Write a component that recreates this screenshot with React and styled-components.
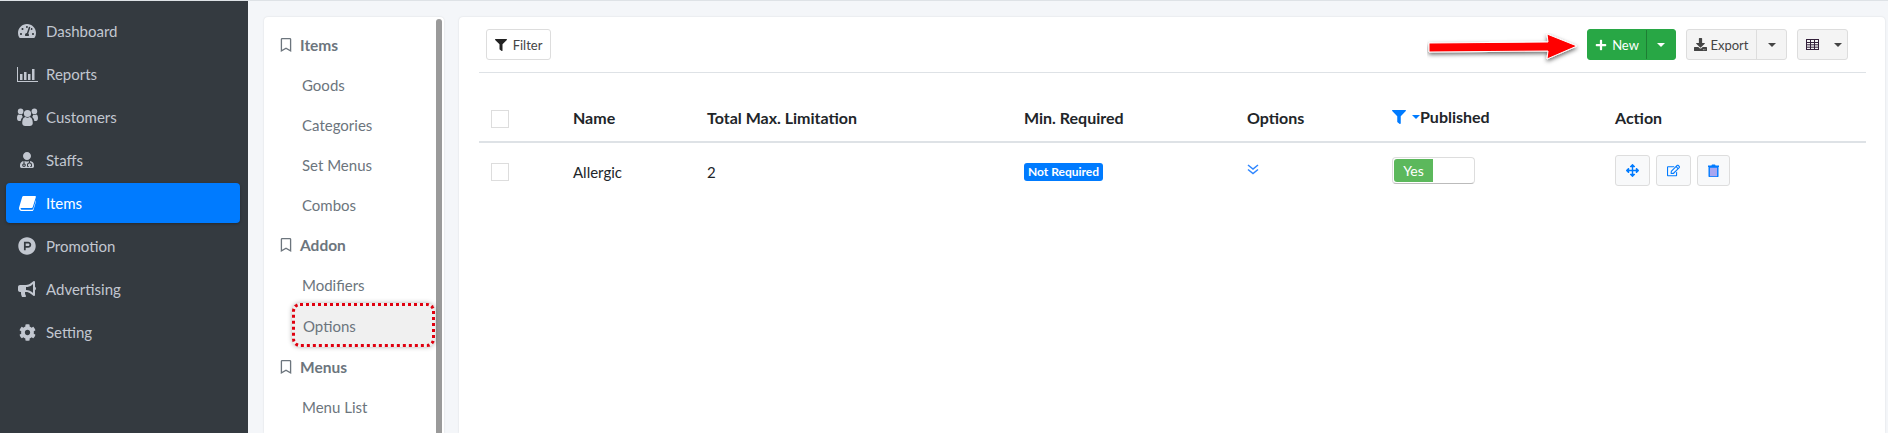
import styled, { createGlobalStyle } from "styled-components";
import {
  FaTachometerAlt,
  FaUserMd,
  FaProductHunt,
  FaBullhorn,
  FaCog,
  FaRegBookmark,
  FaFilter,
  FaPlus,
  FaDownload,
  FaArrowsAlt,
  FaRegEdit,
} from "react-icons/fa";

const GlobalStyle = createGlobalStyle`
  html, body {
    margin: 0;
    height: 100%;
    overflow: hidden;
    font-family: "Lato", "Liberation Sans", sans-serif;
    background: #f4f6f9;
  }
  #root {
    height: 100%;
  }
`;

const Page = styled.div`
  display: flex;
  height: 100%;
  box-sizing: border-box;
  border-top: 1px solid #dee2e6;
`;

const Sidebar = styled.aside`
  width: 248px;
  flex-shrink: 0;
  background: #343a40;
  padding: 10px 8px 0 6px;
  box-sizing: border-box;
`;

const NavItem = styled.div`
  display: flex;
  align-items: center;
  height: 40px;
  margin-bottom: 3px;
  border-radius: 4px;
  font-size: 15px;
  color: ${(p) => (p.$active ? "#fff" : "#c2c7d0")};
  background: ${(p) => (p.$active ? "#007bff" : "transparent")};
  box-shadow: ${(p) => (p.$active ? "0 1px 3px rgba(0,0,0,.3)" : "none")};
`;

const NavIcon = styled.span`
  width: 40px;
  flex-shrink: 0;
  box-sizing: border-box;
  padding-left: 2px;
  display: flex;
  justify-content: center;
  font-size: 18px;
  line-height: 0;
`;

const Content = styled.main`
  flex: 1;
  min-width: 0;
  display: flex;
  gap: 15px;
  padding: 16px 3px 0 16px;
`;

const SubCard = styled.nav`
  width: 180px;
  flex-shrink: 0;
  background: #fff;
  border-radius: 4px 4px 0 0;
  box-shadow: 0 0 2px rgba(0, 0, 0, 0.12);
  padding: 8px 8px 0 15px;
  box-sizing: border-box;
  position: relative;
  overflow: hidden;
`;

const ScrollThumb = styled.div`
  position: absolute;
  top: 2px;
  bottom: 0;
  right: 2px;
  width: 6px;
  border-radius: 3px 3px 0 0;
  background: #9a9a9a;
`;

const GroupTitle = styled.div`
  display: flex;
  align-items: center;
  gap: 7px;
  height: 40px;
  font-size: 15.5px;
  font-weight: 700;
  color: #6c757d;
  svg {
    font-size: 14px;
    color: #6c757d;
  }
`;

const SubLink = styled.div`
  display: flex;
  align-items: center;
  height: 40px;
  padding-left: 23px;
  font-size: 15px;
  color: #6c757d;
`;

const SelectedLink = styled(SubLink)`
  position: relative;
  height: 44px;
  width: 143px;
  box-sizing: border-box;
  margin: -2px 0 0 13px;
  padding: 2px 0 0 8px;
  background: #f0f0f0;
  border: 3px dotted #e0000f;
  border-radius: 8px;
  box-shadow: 0 0 5px rgba(0, 0, 0, 0.3);
`;

const MainCard = styled.section`
  flex: 1;
  min-width: 0;
  background: #fff;
  border-radius: 4px 4px 0 0;
  box-shadow: 0 0 2px rgba(0, 0, 0, 0.12);
  padding: 12px 19px 0 20px;
  position: relative;
`;

const Toolbar = styled.div`
  display: flex;
  align-items: flex-start;
  justify-content: space-between;
  height: 43px;
  padding: 0 18px 0 7px;
  border-bottom: 1px solid #dee2e6;
`;

const ToolGroup = styled.div`
  display: flex;
  gap: 10px;
`;

const FilterButton = styled.button`
  display: flex;
  align-items: center;
  gap: 6px;
  height: 31px;
  width: 65px;
  box-sizing: border-box;
  justify-content: center;
  padding: 0;
  background: #fff;
  border: 1px solid #ddd;
  border-radius: 3px;
  font: inherit;
  font-size: 13px;
  color: #444;
  svg {
    font-size: 12px;
    color: #222;
  }
`;

const SplitButton = styled.div`
  display: flex;
  height: 31px;
  box-sizing: border-box;
  border-radius: 3px;
  overflow: hidden;
  border: 1px solid ${(p) => (p.$primary ? "#28a745" : "#ddd")};
  background: ${(p) => (p.$primary ? "#28a745" : "#f4f4f4")};
  color: ${(p) => (p.$primary ? "#fff" : "#444")};
  font-size: 13px;
`;

const SplitMain = styled.div`
  display: flex;
  align-items: center;
  justify-content: center;
  gap: ${(p) => p.$gap || 5}px;
  width: ${(p) => p.$width}px;
  border-right: 1px solid ${(p) => p.$line || "transparent"};
  box-sizing: border-box;
`;

const Caret = styled.span`
  display: block;
  width: 0;
  height: 0;
  border-left: 4px solid transparent;
  border-right: 4px solid transparent;
  border-top: 4px solid ${(p) => p.$color || "#444"};
`;

const SplitCaret = styled.div`
  display: flex;
  align-items: center;
  justify-content: center;
  width: ${(p) => p.$width}px;
`;

const Table = styled.table`
  width: 100%;
  table-layout: fixed;
  border-collapse: collapse;
  color: #212529;
  margin-top: 23px;
`;

const Th = styled.th`
  box-sizing: border-box;
  width: ${(p) => p.$width}px;
  height: 46px;
  padding: 0 12px 3px;
  text-align: left;
  font-weight: 700;
  font-size: 16px;
  border-bottom: 2px solid #dee2e6;
  white-space: nowrap;
`;

const Td = styled.td`
  height: 58px;
  padding: 0 12px;
  font-size: 15px;
  vertical-align: middle;
`;

const Check = styled.span`
  display: block;
  width: 18px;
  height: 18px;
  box-sizing: border-box;
  border: 1px solid #ddd;
  background: #fff;
`;

const HeadCheck = styled(Check)`
  margin-top: 3px;
`;

const Badge = styled.span`
  display: block;
  background: #007bff;
  color: #fff;
  font-size: 12px;
  font-weight: 700;
  line-height: 18px;
  height: 18px;
  width: 79px;
  text-align: center;
  border-radius: 3px;
  white-space: nowrap;
`;

const PublishedHead = styled.span`
  display: inline-flex;
  align-items: center;
  svg {
    font-size: 14px;
    color: #007bff;
    margin-right: 6px;
  }
`;

const Chevrons = styled.svg`
  display: block;
  margin-bottom: 5px;
`;

const Toggle = styled.div`
  display: flex;
  width: 83px;
  height: 27px;
  margin-bottom: 4px;
  padding: 1px;
  box-sizing: border-box;
  border: 1px solid #ddd;
  border-bottom-color: #bbb;
  border-radius: 4px;
  background: #fff;
`;

const ToggleOn = styled.div`
  width: 39px;
  display: flex;
  align-items: center;
  justify-content: center;
  background: #5cb85c;
  color: #fff;
  font-size: 14px;
  border-radius: 3px 0 0 3px;
`;

const ActionRow = styled.div`
  display: flex;
  gap: 6px;
  margin-bottom: 3px;
`;

const ActionButton = styled.button`
  display: flex;
  align-items: center;
  justify-content: center;
  width: ${(p) => p.$width || 35}px;
  height: 31px;
  padding: 0;
  background: #f8f9fa;
  border: 1px solid #ddd;
  border-radius: 3px;
  color: #007bff;
  font-size: 13px;
`;

const Pointer = styled.svg`
  position: absolute;
  left: 968px;
  top: 16px;
`;

const BarsIcon = () => (
  <svg width="21" height="15" viewBox="0 0 21 15" fill="currentColor">
    <path d="M0 0h1v14h20v1H0z" />
    <path d="M3 7h2.500v6H3zM7 5h2.500v8H7zM11 7h2.500v6H11zM15 2h2.500v11H15z" />
  </svg>
);

const UsersIcon = () => (
  <svg width="21" height="18" viewBox="0 0 21 18" fill="currentColor">
    <circle cx="10.500" cy="5.500" r="3.600" />
    <circle cx="3.600" cy="3.400" r="2.800" />
    <circle cx="17.400" cy="3.400" r="2.800" />
    <path d="M5.200 15c0-4 1.600-6 3.200-6 .7.500 1.300.8 2.100.8s1.400-.3 2.100-.8c1.600 0 3.200 2 3.200 6 0 2-1.300 3-3 3H8.200c-1.700 0-3-1-3-3z" />
    <path d="M0 10c0-2 .6-3.600 2-3.600.5.400 1 .6 1.600.6.500 0 1-.1 1.400-.3-.1.800.3 1.700.9 2.300-1.300.8-2 2.400-2.200 4H2c-1.200 0-2-1-2-3zM21 10c0-2-.6-3.600-2-3.600-.5.400-1 .6-1.600.6-.5 0-1-.1-1.400-.3.1.800-.3 1.700-.9 2.300 1.300.8 2 2.400 2.200 4H19c1.200 0 2-1 2-3z" />
  </svg>
);

const BookIcon = () => (
  <svg width="17" height="15" viewBox="0 0 17 15" fill="currentColor">
    <path d="M4.500 0H16c.7 0 1 .5.8 1.200l-3 9.800c-.2.600-.7 1-1.300 1H2.400c-.6 0-1 .6-.8 1.100.2.400.6.6 1.100.6h10.400c.5 0 .9-.3 1.100-.7l2.800-9v1.500l-2.500 8.200c-.2.700-.8 1.300-1.500 1.300H2.600C1.200 15 .1 13.900 0 12.500c0-.3 0-.6.1-.9L3.200 1c.2-.6.700-1 1.300-1z" />
  </svg>
);

const GridIcon = () => (
  <svg width="13" height="11" viewBox="0 0 13 11" fill="none" stroke="#33203a" strokeWidth="1">
    <rect x="0.500" y="0.500" width="12" height="10" />
    <path d="M0 3.500h13M0 5.800h13M0 8.200h13M4.500 0v11M8.500 0v11" />
  </svg>
);

const TrashIcon = () => (
  <svg width="11" height="13" viewBox="0 0 11 13">
    <path d="M1.200 3h8.600v9a1 1 0 0 1-1 1H2.200a1 1 0 0 1-1-1z" fill="#a9a6f0" stroke="#007bff" strokeWidth="1.400" />
    <path d="M0 1.600h3.400L4 .4h3l.6 1.200H11V3H0z" fill="#007bff" />
  </svg>
);

const navItems = [
  { label: "Dashboard", icon: <FaTachometerAlt /> },
  { label: "Reports", icon: <BarsIcon /> },
  { label: "Customers", icon: <UsersIcon /> },
  { label: "Staffs", icon: <FaUserMd size={16} /> },
  { label: "Items", icon: <BookIcon />, active: true },
  { label: "Promotion", icon: <FaProductHunt /> },
  { label: "Advertising", icon: <FaBullhorn /> },
  { label: "Setting", icon: <FaCog size={17} /> },
];

const subMenu = [
  { title: "Items", links: ["Goods", "Categories", "Set Menus", "Combos"] },
  { title: "Addon", links: ["Modifiers", "Options"] },
  { title: "Menus", links: ["Menu List"] },
];

export default function App() {
  return (
    <>
      <GlobalStyle />
      <Page>
        <Sidebar>
          {navItems.map((item) => (
            <NavItem key={item.label} $active={item.active}>
              <NavIcon>{item.icon}</NavIcon>
              {item.label}
            </NavItem>
          ))}
        </Sidebar>
        <Content>
          <SubCard>
            <ScrollThumb />
            {subMenu.map((group) => (
              <div key={group.title}>
                <GroupTitle>
                  <FaRegBookmark />
                  {group.title}
                </GroupTitle>
                {group.links.map((link) =>
                  link === "Options" ? (
                    <SelectedLink key={link}>{link}</SelectedLink>
                  ) : (
                    <SubLink key={link}>{link}</SubLink>
                  )
                )}
              </div>
            ))}
          </SubCard>
          <MainCard>
            <Toolbar>
              <FilterButton>
                <FaFilter />
                Filter
              </FilterButton>
              <ToolGroup>
                <SplitButton $primary>
                  <SplitMain $width={59} $line="#1e7e34">
                    <FaPlus size={12} />
                    New
                  </SplitMain>
                  <SplitCaret $width={28}>
                    <Caret $color="#fff" />
                  </SplitCaret>
                </SplitButton>
                <SplitButton>
                  <SplitMain $width={70} $gap={3} $line="#ddd">
                    <FaDownload size={13} />
                    Export
                  </SplitMain>
                  <SplitCaret $width={29}>
                    <Caret />
                  </SplitCaret>
                </SplitButton>
                <SplitButton>
                  <SplitMain $width={30}>
                    <GridIcon />
                  </SplitMain>
                  <SplitCaret $width={19}>
                    <Caret />
                  </SplitCaret>
                </SplitButton>
              </ToolGroup>
            </Toolbar>
            <Pointer width="156" height="36" viewBox="0 0 156 36">
              <defs>
                <filter id="arrowShadow" x="-5%" y="-20%" width="110%" height="150%">
                  <feDropShadow dx="0" dy="2" stdDeviation="2" floodColor="#000" floodOpacity="0.6" />
                </filter>
              </defs>
              <polygon
                points="2,10 121,9 120,1 150,13 120,26 121,18 2,19"
                fill="#f00"
                stroke="#fff"
                strokeWidth="1"
                filter="url(#arrowShadow)"
              />
            </Pointer>
            <Table>
              <thead>
                <tr>
                  <Th $width={82}>
                    <HeadCheck />
                  </Th>
                  <Th $width={134}>Name</Th>
                  <Th $width={317}>Total Max. Limitation</Th>
                  <Th $width={223}>Min. Required</Th>
                  <Th $width={145}>Options</Th>
                  <Th $width={223}>
                    <PublishedHead>
                      <FaFilter />
                      <Caret $color="#007bff" />
                      Published
                    </PublishedHead>
                  </Th>
                  <Th>Action</Th>
                </tr>
              </thead>
              <tbody>
                <tr>
                  <Td>
                    <Check />
                  </Td>
                  <Td>Allergic</Td>
                  <Td>2</Td>
                  <Td>
                    <Badge>Not Required</Badge>
                  </Td>
                  <Td>
                    <Chevrons
                      width="12"
                      height="11"
                      viewBox="0 0 12 11"
                      fill="none"
                      stroke="#2e86ff"
                      strokeWidth="1.500"
                    >
                      <path d="M1 1l5 4 5-4M1 5.500l5 4 5-4" />
                    </Chevrons>
                  </Td>
                  <Td>
                    <Toggle>
                      <ToggleOn>Yes</ToggleOn>
                    </Toggle>
                  </Td>
                  <Td>
                    <ActionRow>
                      <ActionButton>
                        <FaArrowsAlt />
                      </ActionButton>
                      <ActionButton>
                        <FaRegEdit />
                      </ActionButton>
                      <ActionButton $width={33}>
                        <TrashIcon />
                      </ActionButton>
                    </ActionRow>
                  </Td>
                </tr>
              </tbody>
            </Table>
          </MainCard>
        </Content>
      </Page>
    </>
  );
}
